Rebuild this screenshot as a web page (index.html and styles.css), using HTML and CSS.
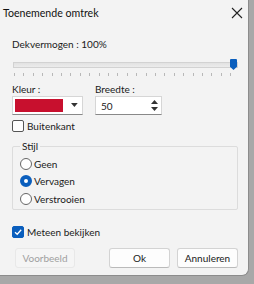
FILE: index.html
```html
<!DOCTYPE html>
<html>
<head>
<meta charset="utf-8">
<link rel="stylesheet" href="styles.css">
</head>
<body>
<div class="dialog">
  <div class="titlebar">
    <span class="title">Toenemende omtrek</span>
    <svg class="close" width="12" height="12" viewBox="0 0 12 12"><path d="M1 1L11 11M11 1L1 11" stroke="#222" stroke-width="1.1"/></svg>
  </div>
  <div class="content">
    <div class="label">Dekvermogen : 100%</div>
    <div class="slider">
      <div class="track"></div>
      <div class="thumb"></div>
      <div class="ticks"></div>
    </div>
    <div class="row">
      <div class="field">
        <div class="label small">Kleur :</div>
        <div class="combo">
          <div class="swatch"></div>
          <svg width="7" height="5" viewBox="0 0 7 5"><path d="M0 0H7L3.5 4Z" fill="#333"/></svg>
        </div>
      </div>
      <div class="field">
        <div class="label small">Breedte :</div>
        <div class="spin">
          <span>50</span>
          <div class="arrows">
            <svg width="7" height="5" viewBox="0 0 7 5"><path d="M0 4H7L3.5 0Z" fill="#333"/></svg>
            <svg width="7" height="5" viewBox="0 0 7 5"><path d="M0 0H7L3.5 4Z" fill="#333"/></svg>
          </div>
        </div>
      </div>
    </div>
    <label class="check first"><span class="box"></span>Buitenkant</label>
    <div class="group">
      <span class="legend">Stijl</span>
      <label class="radio"><span class="circle"></span>Geen</label>
      <label class="radio on"><span class="circle"></span>Vervagen</label>
      <label class="radio"><span class="circle"></span>Verstrooien</label>
    </div>
    <label class="check checked"><span class="box"><svg width="10" height="10" viewBox="0 0 10 10"><path d="M2 5.2L4.2 7.3L8.2 2.8" fill="none" stroke="#fff" stroke-width="1.3"/></svg></span>Meteen bekijken</label>
    <div class="buttons">
      <div class="btn disabled">Voorbeeld</div>
      <div class="spacer"></div>
      <div class="btn">Ok</div>
      <div class="btn">Annuleren</div>
    </div>
  </div>
</div>
</body>
</html>
```
FILE: styles.css
```css
html, body {
  margin: 0;
  padding: 0;
  background: #a8a8a8;
  width: 254px;
  height: 284px;
  overflow: hidden;
}
body {
  font-family: "Lato", "Open Sans", sans-serif;
  font-size: 10px;
  color: #1a1a1a;
}
.dialog {
  width: 249px;
  height: 276px;
  background: #f3f3f3;
  border-right: 1px solid #8c8c8c;
  border-bottom: 1px solid #8c8c8c;
  border-radius: 0 0 7px 0;
  box-sizing: border-box;
}
.titlebar {
  height: 26px;
  display: flex;
  align-items: center;
  justify-content: space-between;
  padding: 0 5px 0 3px;
}
.title {
  font-size: 10.6px;
  color: #111;
}
.close { display: block; }
.content {
  padding: 10px 10px 0 12px;
}
.label {
  line-height: 16px;
}
.label.small {
  line-height: 14px;
}
.slider {
  position: relative;
  height: 24px;
  margin-top: 2px;
}
.track {
  position: absolute;
  left: 1px;
  right: 0;
  top: 8px;
  height: 4px;
  background: linear-gradient(#e2e2e2, #ececec);
  border: 1px solid #d2d2d2;
}
.thumb {
  position: absolute;
  right: 1px;
  top: 5px;
  width: 7px;
  height: 11px;
  background: #0a5ebd;
  clip-path: polygon(0 0, 100% 0, 100% 70%, 50% 100%, 0 70%);
  border-radius: 1px;
}
.ticks {
  position: absolute;
  left: 2px;
  right: 2px;
  top: 19px;
  height: 3px;
  background: repeating-linear-gradient(90deg, #b8b8b8 0 1px, transparent 1px 9.4px);
}
.row {
  display: flex;
  gap: 12px;
  margin-top: 4px;
}
.combo {
  width: 71px;
  height: 19px;
  background: #fff;
  border: 1px solid #d6d6d6;
  border-bottom-color: #888;
  box-sizing: border-box;
  display: flex;
  align-items: center;
  padding: 0 4px 0 2px;
  gap: 8px;
}
.swatch {
  width: 50px;
  height: 13px;
  background: #c8102e;
}
.spin {
  width: 67px;
  height: 19px;
  background: #fff;
  border: 1px solid #d6d6d6;
  border-bottom-color: #888;
  box-sizing: border-box;
  display: flex;
  align-items: center;
  justify-content: space-between;
  padding: 0 3px 0 5px;
}
.arrows {
  display: flex;
  flex-direction: column;
  gap: 2px;
}
.arrows svg { display: block; }
.check {
  display: flex;
  align-items: center;
  gap: 3px;
  height: 16px;
}
.check.first {
  margin-top: 3px;
}
.box {
  width: 10px;
  height: 10px;
  border: 1px solid #555;
  border-radius: 2px;
  background: #fff;
  box-sizing: content-box;
  display: flex;
  align-items: center;
  justify-content: center;
}
.checked .box {
  background: #0a5ebd;
  border-color: #0a5ebd;
}
.group {
  position: relative;
  margin-top: 12px;
  padding: 8px 0 0 7px;
  border: 1px solid #dcdcdc;
  border-radius: 2px;
  width: 226px;
  height: 64px;
  box-sizing: border-box;
}
.legend {
  position: absolute;
  left: 7px;
  top: -8px;
  padding: 0 2px;
  background: #f3f3f3;
  line-height: 14px;
}
.radio {
  display: flex;
  align-items: center;
  gap: 2px;
  height: 17.5px;
}
.circle {
  width: 10px;
  height: 10px;
  border: 1px solid #666;
  border-radius: 50%;
  background: #fff;
  box-sizing: content-box;
}
.radio.on .circle {
  border: 4px solid #0a5ebd;
  width: 4px;
  height: 4px;
}
.checked {
  margin-top: 14px;
}
.buttons {
  display: flex;
  gap: 7px;
  margin-top: 8px;
  padding-left: 3px;
}
.spacer { flex: 1; }
.btn {
  width: 61px;
  height: 20px;
  border: 1px solid #d3d3d3;
  border-bottom-color: #bababa;
  border-radius: 3px;
  background: #fdfdfd;
  box-sizing: border-box;
  display: flex;
  align-items: center;
  justify-content: center;
}
.btn.disabled {
  width: 60px;
  color: #a0a0a0;
  background: #f5f5f5;
  border-color: #e8e8e8;
}
```
